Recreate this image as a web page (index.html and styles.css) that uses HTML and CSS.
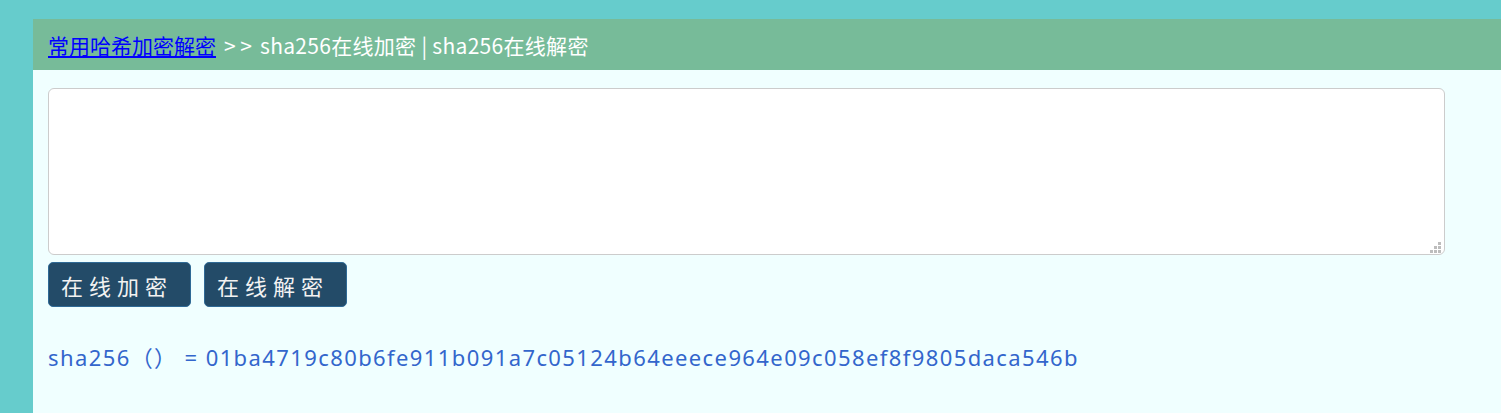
FILE: index.html
```html
<!DOCTYPE html>
<html lang="zh-CN">
<head>
<meta charset="utf-8">
<title>sha256在线加密 | sha256在线解密</title>
<link rel="stylesheet" href="styles.css">
</head>
<body>
<div class="page">
  <div class="crumb">
    <a href="#" class="crumb-link">常用哈希加密解密</a>
    <span class="crumb-sep">&gt; &gt;</span>
    <span class="crumb-title">sha256在线加密 | sha256在线解密</span>
  </div>
  <div class="content">
    <textarea class="input"></textarea>
    <div class="actions">
      <button class="btn">在线加密</button>
      <button class="btn">在线解密</button>
    </div>
    <p class="result">sha256（） = 01ba4719c80b6fe911b091a7c05124b64eeece964e09c058ef8f9805daca546b</p>
  </div>
</div>
</body>
</html>
```

FILE: styles.css
```css
html, body {
  margin: 0;
  padding: 0;
  background: #66cccc;
  font-family: "Noto Sans", "Open Sans", "Noto Sans CJK SC", sans-serif;
}
.page {
  margin: 19px 0 0 33px;
  background: #f0ffff;
  min-height: 394px;
}
.crumb {
  background: #77bb99;
  height: 51px;
  display: flex;
  align-items: center;
  padding-left: 15px;
  font-size: 21px;
  color: #ffffff;
  font-family: "Noto Sans CJK SC", sans-serif;
}
.crumb-link {
  color: #0000ff;
  text-decoration: underline;
}
.crumb-sep {
  margin: 0 8px 0 8px;
  white-space: pre;
}
.crumb-title {
  letter-spacing: 0.3px;
}
.content {
  padding: 18px 15px 0;
}
.input {
  display: block;
  box-sizing: border-box;
  width: 1397px;
  height: 167px;
  border: 1px solid #cccccc;
  border-radius: 6px;
  margin: 0;
  resize: none;
  background:
    linear-gradient(#bdbdbd, #bdbdbd) right 3px bottom 9px / 3px 3px no-repeat,
    linear-gradient(#bdbdbd, #bdbdbd) right 3px bottom 5px / 3px 3px no-repeat,
    linear-gradient(#bdbdbd, #bdbdbd) right 7px bottom 5px / 3px 3px no-repeat,
    linear-gradient(#bdbdbd, #bdbdbd) right 3px bottom 1px / 3px 3px no-repeat,
    linear-gradient(#bdbdbd, #bdbdbd) right 7px bottom 1px / 3px 3px no-repeat,
    linear-gradient(#bdbdbd, #bdbdbd) right 11px bottom 1px / 3px 3px no-repeat,
    #ffffff;
}
.actions {
  display: flex;
  gap: 13px;
  margin-top: 7px;
}
.btn {
  box-sizing: border-box;
  width: 143px;
  height: 45px;
  background: #234b68;
  border: 1px solid #2f6a96;
  border-radius: 5px;
  color: #f2f2f2;
  font-size: 22px;
  letter-spacing: 6px;
  padding: 0 0 0 12px;
  text-align: left;
  font-family: "Noto Sans CJK SC", sans-serif;
}
.result {
  margin: 33px 0 0;
  color: #3366cc;
  font-size: 22px;
  letter-spacing: 1.4px;
  font-family: "Noto Sans", "Noto Sans CJK SC", sans-serif;
}
```
